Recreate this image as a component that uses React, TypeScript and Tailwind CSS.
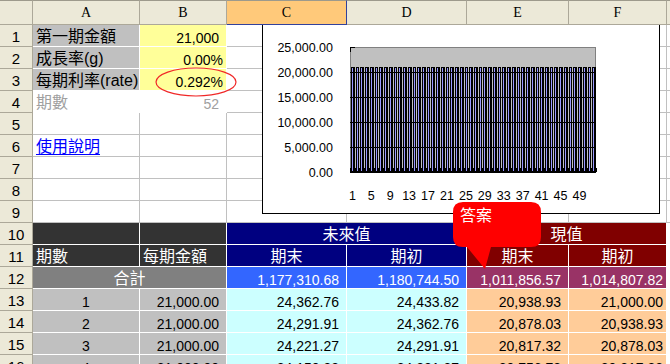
import React from "react";

type CellProps = { className?: string; children?: React.ReactNode };

// one spreadsheet cell: right + bottom border, text sits near the bottom like Excel
const Cell = ({ className = "", children }: CellProps) => (
  <div
    className={`flex items-end overflow-hidden whitespace-nowrap border-r border-b leading-[14px] ${className}`}
  >
    {children}
  </div>
);

const RowHead = ({ n }: { n: number }) => (
  <div className="flex items-end justify-center border-r border-b border-[#ACA899] bg-[#ECE9D8] pb-[2px] text-[15px] leading-[14px] text-black">
    {n}
  </div>
);

const ColHead = ({ label, active }: { label: string; active?: boolean }) => (
  <div
    className={`${
      active
        ? "border-[#31419C] bg-[#FFC97A]"
        : "border-[#ACA899] bg-[#ECE9D8]"
    } flex items-end justify-center border-t border-t-[#9D9A8C] border-r border-b pb-[4px] font-['Liberation_Serif',serif] text-[14px] leading-[14px] text-black`}
  >
    {label}
  </div>
);

const Blank = () => <Cell className="border-[#C0C0C0] bg-white" />;
const Edge = () => <div className="border-b border-[#C0C0C0] bg-white" />;
const EdgePlain = () => <div className="bg-white" />;

const dataRows = [
  ["1", "21,000.00", "24,362.76", "24,433.82", "20,938.93", "21,000.00"],
  ["2", "21,000.00", "24,291.91", "24,362.76", "20,878.03", "20,938.93"],
  ["3", "21,000.00", "24,221.27", "24,291.91", "20,817.32", "20,878.03"],
  ["4", "21,000.00", "24,150.83", "24,221.27", "20,756.78", "20,817.32"],
];

const Chart = () => {
  const x0 = 350;
  const w = 246;
  const n = 52;
  const step = w / n;
  // each bar: black outline filling the slot except a 1px gap, thin blue core
  const bars = Array.from({ length: n }, (_, i) => {
    const l = Math.round(x0 + i * step) + 1;
    const r = Math.round(x0 + (i + 1) * step);
    return { l, w: r - l };
  });
  const yLabels = ["25,000.00", "20,000.00", "15,000.00", "10,000.00", "5,000.00", "0.00"];
  const xLabels = [1, 5, 9, 13, 17, 21, 25, 29, 33, 37, 41, 45, 49];

  return (
    <div className="absolute left-[262px] top-[25px] h-[189px] w-[398px] border-x border-b border-black bg-white">
      <svg width="396" height="188" className="block">
        <g transform="translate(-263 -25)">
          <rect x={350.5} y={47.5} width={245} height={124} fill="#C0C0C0" stroke="#808080" shapeRendering="crispEdges" />
          {bars.map((b, i) => (
            <g key={i} shapeRendering="crispEdges">
              <rect x={b.l} y={67} width={b.w} height={105} fill="#000" />
              <rect x={b.l + 1} y={68} width={1} height={104} fill="#9999FF" />
            </g>
          ))}
          {[72.5, 97.5, 122.5, 147.5].map((y) => (
            <line key={y} x1={350} x2={596} y1={y} y2={y} stroke="#000" shapeRendering="crispEdges" />
          ))}
          <rect x={350} y={171} width={246} height={2} fill="#000" shapeRendering="crispEdges" />
          {Array.from({ length: n + 1 }, (_, k) => (
            <rect key={k} x={Math.round(x0 + k * step)} y={168} width={1} height={4} fill="#000" shapeRendering="crispEdges" />
          ))}
          <rect x={350} y={47} width={5} height={1} fill="#000" shapeRendering="crispEdges" />
          <rect x={350} y={47} width={1} height={5} fill="#000" shapeRendering="crispEdges" />
          <g fontFamily="Liberation Sans, sans-serif" fontSize="12.5" fill="#000">
            {yLabels.map((t, k) => (
              <text key={t} x={333} y={47 + k * 25 + 5} textAnchor="end">
                {t}
              </text>
            ))}
            {xLabels.map((v) => (
              <text key={v} x={x0 + (v - 0.5) * step} y={200} textAnchor="middle">
                {v}
              </text>
            ))}
          </g>
        </g>
      </svg>
    </div>
  );
};

const App = () => {
  const num = "justify-end pb-[1px] pr-[7px] text-[14px]";
  const numF = "justify-end pb-[1px] pr-[3px] text-[14px]";
  const cjk = "pb-[2px] pl-[3px] text-[16px]";
  const cjkMid = "justify-center pb-[2px] text-[16px]";

  return (
    <div className="relative h-[364px] w-[670px] overflow-hidden bg-white font-['Liberation_Sans','Noto_Sans_CJK_TC',sans-serif] text-black">
      <div className="grid grid-cols-[33px_107px_87px_120px_120px_102px_98px_3px] grid-rows-[25px_repeat(16,22px)]">
        {/* column headers */}
        <div className="border-t border-t-[#9D9A8C] border-r border-b border-[#ACA899] bg-[#ECE9D8]" />
        <ColHead label="A" />
        <ColHead label="B" />
        <ColHead label="C" active />
        <ColHead label="D" />
        <ColHead label="E" />
        <ColHead label="F" />
        <div className="border-t border-t-[#9D9A8C] border-b border-[#ACA899] bg-[#ECE9D8]" />

        {/* rows 1-3: inputs */}
        <RowHead n={1} />
        <Cell className={`border-white bg-[#C0C0C0] ${cjk}`}>第一期金額</Cell>
        <Cell className={`border-white bg-[#FFFF99] ${num}`}>21,000</Cell>
        <Blank /><Blank /><Blank /><Blank /><Edge />

        <RowHead n={2} />
        <Cell className={`border-white bg-[#C0C0C0] ${cjk}`}>成長率(g)</Cell>
        <Cell className="justify-end border-white bg-[#FFFF99] pb-[1px] pr-[3px] text-[14px]">0.00%</Cell>
        <Blank /><Blank /><Blank /><Blank /><Edge />

        <RowHead n={3} />
        <Cell className={`border-white bg-[#C0C0C0] ${cjk}`}>每期利率(rate)</Cell>
        <Cell className="justify-end border-white bg-[#FFFF99] pb-[1px] pr-[3px] text-[14px]">0.292%</Cell>
        <Blank /><Blank /><Blank /><Blank /><Edge />

        <RowHead n={4} />
        <Cell className={`border-white bg-white text-[#A0A0A0] ${cjk}`}>期數</Cell>
        <Cell className={`border-white bg-white text-[#A0A0A0] ${num}`}>52</Cell>
        <Blank /><Blank /><Blank /><Blank /><Edge />

        <RowHead n={5} />
        <Blank /><Blank /><Blank /><Blank /><Blank /><Blank /><Edge />

        <RowHead n={6} />
        <Cell className={`border-[#C0C0C0] bg-white ${cjk}`}>
          <span className="text-[#0000FF] underline underline-offset-2">使用說明</span>
        </Cell>
        <Blank /><Blank /><Blank /><Blank /><Blank /><Edge />

        <RowHead n={7} />
        <Blank /><Blank /><Blank /><Blank /><Blank /><Blank /><Edge />
        <RowHead n={8} />
        <Blank /><Blank /><Blank /><Blank /><Blank /><Blank /><Edge />
        <RowHead n={9} />
        <Blank /><Blank /><Blank /><Blank /><Blank /><Blank /><Edge />

        {/* table header */}
        <RowHead n={10} />
        <Cell className="border-white bg-[#333333]" />
        <Cell className="border-white bg-[#333333]" />
        <Cell className={`col-span-2 border-white bg-[#000080] text-white ${cjkMid}`}>未來值</Cell>
        <Cell className={`col-span-2 border-white bg-[#800000] text-white ${cjkMid}`}>現值</Cell>
        <EdgePlain />

        <RowHead n={11} />
        <Cell className={`border-white bg-[#333333] text-white ${cjk}`}>期數</Cell>
        <Cell className={`border-white bg-[#333333] text-white ${cjk}`}>每期金額</Cell>
        <Cell className={`border-white bg-[#000080] text-white ${cjkMid}`}>期末</Cell>
        <Cell className={`border-white bg-[#000080] text-white ${cjkMid}`}>期初</Cell>
        <Cell className={`border-white bg-[#800000] text-white ${cjkMid}`}>期末</Cell>
        <Cell className={`border-white bg-[#800000] text-white ${cjkMid}`}>期初</Cell>
        <EdgePlain />

        <RowHead n={12} />
        <Cell className={`col-span-2 border-white bg-[#808080] text-white ${cjkMid}`}>合計</Cell>
        <Cell className={`border-white bg-[#3366FF] text-white ${num}`}>1,177,310.68</Cell>
        <Cell className={`border-white bg-[#3366FF] text-white ${num}`}>1,180,744.50</Cell>
        <Cell className={`border-white bg-[#993366] text-white ${num}`}>1,011,856.57</Cell>
        <Cell className={`border-white bg-[#993366] text-white ${numF}`}>1,014,807.82</Cell>
        <EdgePlain />

        {dataRows.map((r, i) => (
          <React.Fragment key={r[0]}>
            <RowHead n={13 + i} />
            <Cell className="justify-center border-white bg-[#C0C0C0] pb-[1px] text-[14px]">{r[0]}</Cell>
            <Cell className={`border-white bg-[#C0C0C0] ${num}`}>{r[1]}</Cell>
            <Cell className={`border-white bg-[#CCFFFF] ${num}`}>{r[2]}</Cell>
            <Cell className={`border-white bg-[#CCFFFF] ${num}`}>{r[3]}</Cell>
            <Cell className={`border-white bg-[#FFCC99] ${num}`}>{r[4]}</Cell>
            <Cell className={`border-white bg-[#FFCC99] ${numF}`}>{r[5]}</Cell>
            <EdgePlain />
          </React.Fragment>
        ))}
      </div>

      <Chart />

      {/* red ring around the rate */}
      <svg className="absolute left-[150px] top-[63px]" width="95" height="40">
        <ellipse cx={46} cy={19} rx={40} ry={14} fill="none" stroke="#F02828" strokeWidth="1.2" />
      </svg>

      {/* callout */}
      <svg className="absolute left-[450px] top-[200px]" width="95" height="72">
        <path
          d="M13 2 H81 Q91 2 91 12 V37 Q91 47 81 47 H41 L35 69 L17 47 H13 Q3 47 3 37 V12 Q3 2 13 2 Z"
          fill="#FF0000"
        />
      </svg>
      <div className="absolute left-[460px] top-[208px] text-[16px] leading-[16px] text-white">答案</div>
    </div>
  );
};

export default App;
